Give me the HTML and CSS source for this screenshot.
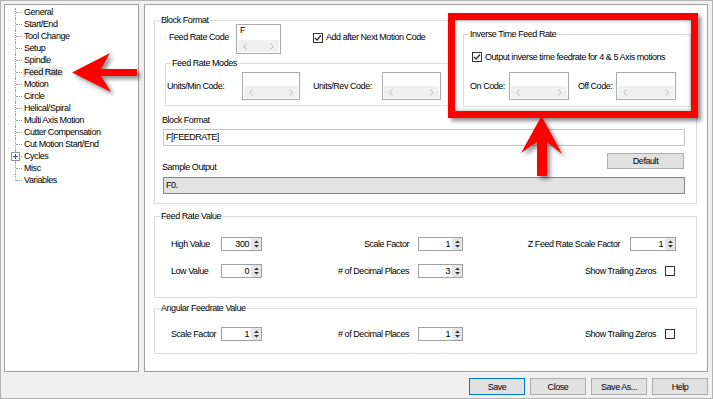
FILE: index.html
```html
<!DOCTYPE html>
<html>
<head>
<meta charset="utf-8">
<title>Feed Rate</title>
<link rel="stylesheet" href="styles.css">
</head>
<body>
<div class="window">
  <div class="main">
    <div class="tree">
      <ul>
        <li><span>General</span></li>
        <li><span>Start/End</span></li>
        <li><span>Tool Change</span></li>
        <li><span>Setup</span></li>
        <li><span>Spindle</span></li>
        <li><span class="sel">Feed Rate</span></li>
        <li><span>Motion</span></li>
        <li><span>Circle</span></li>
        <li><span>Helical/Spiral</span></li>
        <li><span>Multi Axis Motion</span></li>
        <li><span>Cutter Compensation</span></li>
        <li><span>Cut Motion Start/End</span></li>
        <li class="expandable"><span class="exp"><svg width="7" height="7" viewBox="0 0 7 7"><path d="M1 3.5H6M3.5 1V6" stroke="#2a4f9a" stroke-width="1"/></svg></span><span>Cycles</span></li>
        <li><span>Misc</span></li>
        <li><span>Variables</span></li>
      </ul>
    </div>
    <div class="panel">
      <div class="group g-block">
        <div class="legend">Block Format</div>
        <div class="top">
          <div class="topleft">
            <div class="row1">
              <div class="lbl w-frc">Feed Rate Code</div>
              <div class="mbox frc">
                <div class="mtext">F</div>
                <div class="sb"><svg width="4" height="7" viewBox="0 0 4 7"><path d="M3.5 0.5L0.8 3.5L3.5 6.5" fill="none" stroke="#b5b5b5"/></svg><svg width="4" height="7" viewBox="0 0 4 7"><path d="M0.5 0.5L3.2 3.5L0.5 6.5" fill="none" stroke="#b5b5b5"/></svg></div>
              </div>
              <div class="chk on"><svg width="8" height="8" viewBox="0 0 8 8"><path d="M1 4L3 6.2L7 1.5" fill="none" stroke="#222" stroke-width="1.2"/></svg></div>
              <div class="chklbl">Add after Next Motion Code</div>
            </div>
            <div class="group g-modes">
              <div class="legend">Feed Rate Modes</div>
              <div class="modes-row">
                <div class="lbl w-umc">Units/Min Code:</div>
                <div class="mbox box58">
                  <div class="mtext"></div>
                  <div class="sb"><svg width="4" height="7" viewBox="0 0 4 7"><path d="M3.5 0.5L0.8 3.5L3.5 6.5" fill="none" stroke="#b5b5b5"/></svg><svg width="4" height="7" viewBox="0 0 4 7"><path d="M0.5 0.5L3.2 3.5L0.5 6.5" fill="none" stroke="#b5b5b5"/></svg></div>
                </div>
                <div class="lbl w-urc">Units/Rev Code:</div>
                <div class="mbox box59">
                  <div class="mtext"></div>
                  <div class="sb"><svg width="4" height="7" viewBox="0 0 4 7"><path d="M3.5 0.5L0.8 3.5L3.5 6.5" fill="none" stroke="#b5b5b5"/></svg><svg width="4" height="7" viewBox="0 0 4 7"><path d="M0.5 0.5L3.2 3.5L0.5 6.5" fill="none" stroke="#b5b5b5"/></svg></div>
                </div>
              </div>
            </div>
          </div>
          <div class="group g-inverse">
            <div class="legend">Inverse Time Feed Rate</div>
            <div class="inv-chkrow">
              <div class="chk on"><svg width="8" height="8" viewBox="0 0 8 8"><path d="M1 4L3 6.2L7 1.5" fill="none" stroke="#222" stroke-width="1.2"/></svg></div>
              <div class="chklbl2">Output inverse time feedrate for 4 &amp; 5 Axis motions</div>
            </div>
            <div class="inv-row">
              <div class="lbl w-on">On Code:</div>
              <div class="mbox box60">
                <div class="mtext"></div>
                <div class="sb"><svg width="4" height="7" viewBox="0 0 4 7"><path d="M3.5 0.5L0.8 3.5L3.5 6.5" fill="none" stroke="#b5b5b5"/></svg><svg width="4" height="7" viewBox="0 0 4 7"><path d="M0.5 0.5L3.2 3.5L0.5 6.5" fill="none" stroke="#b5b5b5"/></svg></div>
              </div>
              <div class="lbl w-off">Off Code:</div>
              <div class="mbox box60">
                <div class="mtext"></div>
                <div class="sb"><svg width="4" height="7" viewBox="0 0 4 7"><path d="M3.5 0.5L0.8 3.5L3.5 6.5" fill="none" stroke="#b5b5b5"/></svg><svg width="4" height="7" viewBox="0 0 4 7"><path d="M0.5 0.5L3.2 3.5L0.5 6.5" fill="none" stroke="#b5b5b5"/></svg></div>
              </div>
            </div>
          </div>
        </div>
        <div class="lbl bf-lbl">Block Format</div>
        <div class="tbox bf-box">F[FEEDRATE]</div>
        <div class="sample-row">
          <div class="lbl sample-lbl">Sample Output</div>
          <div class="btn default">Default</div>
        </div>
        <div class="tbox sample-box">F0.</div>
      </div>

      <div class="group g-frv">
        <div class="legend">Feed Rate Value</div>
        <div class="frow r1">
          <div class="lbl c1">High Value</div>
          <div class="spin s1"><div class="v">300</div><div class="ar"><svg width="9" height="12" viewBox="0 0 9 12"><path d="M2 5H7L4.5 2.5Z M2 7H7L4.5 9.5Z" fill="#333"/></svg></div></div>
          <div class="lbl c2">Scale Factor</div>
          <div class="spin s2"><div class="v">1</div><div class="ar"><svg width="9" height="12" viewBox="0 0 9 12"><path d="M2 5H7L4.5 2.5Z M2 7H7L4.5 9.5Z" fill="#333"/></svg></div></div>
          <div class="lbl c3">Z Feed Rate Scale Factor</div>
          <div class="spin s3"><div class="v">1</div><div class="ar"><svg width="9" height="12" viewBox="0 0 9 12"><path d="M2 5H7L4.5 2.5Z M2 7H7L4.5 9.5Z" fill="#333"/></svg></div></div>
        </div>
        <div class="frow r2">
          <div class="lbl c1">Low Value</div>
          <div class="spin s1"><div class="v">0</div><div class="ar"><svg width="9" height="12" viewBox="0 0 9 12"><path d="M2 5H7L4.5 2.5Z M2 7H7L4.5 9.5Z" fill="#333"/></svg></div></div>
          <div class="lbl c2"># of Decimal Places</div>
          <div class="spin s2"><div class="v">3</div><div class="ar"><svg width="9" height="12" viewBox="0 0 9 12"><path d="M2 5H7L4.5 2.5Z M2 7H7L4.5 9.5Z" fill="#333"/></svg></div></div>
          <div class="c3b"><div class="lbl">Show Trailing Zeros</div><div class="chk"></div></div>
        </div>
      </div>

      <div class="group g-ang">
        <div class="legend">Angular Feedrate Value</div>
        <div class="frow r3">
          <div class="lbl c1">Scale Factor</div>
          <div class="spin s1"><div class="v">1</div><div class="ar"><svg width="9" height="12" viewBox="0 0 9 12"><path d="M2 5H7L4.5 2.5Z M2 7H7L4.5 9.5Z" fill="#333"/></svg></div></div>
          <div class="lbl c2"># of Decimal Places</div>
          <div class="spin s2"><div class="v">1</div><div class="ar"><svg width="9" height="12" viewBox="0 0 9 12"><path d="M2 5H7L4.5 2.5Z M2 7H7L4.5 9.5Z" fill="#333"/></svg></div></div>
          <div class="c3b"><div class="lbl">Show Trailing Zeros</div><div class="chk"></div></div>
        </div>
      </div>
    </div>
  </div>
  <div class="buttons">
    <div class="btn primary">Save</div>
    <div class="btn">Close</div>
    <div class="btn">Save As...</div>
    <div class="btn">Help</div>
  </div>

  <div class="redbox"></div>
  <svg class="arrows" width="713" height="399" viewBox="0 0 713 399">
    <polygon points="72,72.5 110,53 101,69 137,69 137,76 101,76 111,92" fill="#ff0000"/>
    <polygon points="541.5,116 562,154 547,142 547,176 537,176 537,142 521,153" fill="#ff0000"/>
  </svg>
</div>
</body>
</html>
```

FILE: styles.css
```css
* {
  box-sizing: border-box;
  margin: 0;
  padding: 0;
}

html, body {
  width: 713px;
  height: 399px;
  overflow: hidden;
}

body {
  background: #f0f0f0;
  font-family: "Liberation Sans", Arial, sans-serif;
  font-size: 9px;
  letter-spacing: -0.45px;
  line-height: 12px;
  color: #000;
}

.window {
  position: relative;
  width: 713px;
  height: 399px;
  border: 1px solid #b4b4b4;
  padding: 3px 4px 3px 3px;
  display: flex;
  flex-direction: column;
  gap: 6px;
}

.main {
  display: flex;
  gap: 5px;
  height: 368px;
}

/* ---------- tree ---------- */
.tree {
  width: 135px;
  background: #fff;
  border: 1px solid #a0a0a0;
}

.tree ul {
  list-style: none;
  margin-top: 1px;
  padding-left: 18px;
}

.tree li {
  position: relative;
  height: 12px;
  white-space: nowrap;
}

.tree li span {
  padding: 0 1px;
}

.tree li::before {
  content: "";
  position: absolute;
  left: -8px;
  top: 0;
  height: 12px;
  border-left: 1px dotted #a0a0a0;
}

.tree li:first-child::before {
  top: 2px;
  height: 10px;
}

.tree li:last-child::before {
  height: 7px;
}

.tree li::after {
  content: "";
  position: absolute;
  left: -7px;
  top: 6px;
  width: 6px;
  border-top: 1px dotted #a0a0a0;
}

.tree li span.sel {
  background: #e8e8e8;
}

.tree li span.exp {
  position: absolute;
  left: -12px;
  top: 2px;
  width: 9px;
  height: 9px;
  padding: 0;
  border: 1px solid #919191;
  background: #fff;
  z-index: 1;
  display: flex;
  align-items: center;
  justify-content: center;
}

/* ---------- right panel ---------- */
.panel {
  width: 564px;
  background: #fff;
  border: 1px solid #a0a0a0;
  padding: 15px 0 0 9px;
}

.group {
  border: 1px solid #dcdcdc;
}

.legend {
  width: max-content;
  height: 12px;
  background: #fff;
  margin: -7px 0 -5px 5px;
  padding: 0 1px;
  position: relative;
}

.lbl {
  white-space: nowrap;
}

.g-block {
  width: 543px;
  height: 184px;
}

.top {
  display: flex;
  height: 86px;
}

.topleft {
  width: 308px;
}

.row1 {
  display: flex;
  align-items: flex-start;
  margin-top: 3px;
  height: 30px;
  padding-left: 14px;
}

.w-frc {
  width: 67px;
  margin-top: 7px;
}

.mbox {
  border: 1px solid #ababab;
  background: #fff;
  display: flex;
  flex-direction: column;
  padding: 0 1px 1px 1px;
}

.mtext {
  flex: 1;
  padding-left: 2px;
  line-height: 11px;
}

.sb {
  height: 12px;
  background: #f0f0f0;
  display: flex;
  align-items: center;
  justify-content: space-between;
  padding: 0 5px;
}

.frc {
  width: 45px;
  height: 30px;
}

.chk {
  width: 10px;
  height: 10px;
  border: 1px solid #333;
  background: #fff;
  display: flex;
  align-items: center;
  justify-content: center;
  flex: none;
}

.row1 .chk {
  margin: 9px 0 0 32px;
}

.chklbl {
  margin: 7px 0 0 3px;
}

.g-modes {
  margin: 9px 0 0 10px;
  width: 288px;
  height: 43px;
}

.modes-row {
  display: flex;
  align-items: center;
  margin-top: 8px;
  padding-left: 1px;
  height: 28px;
}

.w-umc {
  width: 75px;
}

.w-urc {
  width: 69px;
  margin-left: 13px;
}

.box58 {
  width: 58px;
  height: 28px;
}

.box59 {
  width: 59px;
  height: 28px;
}

.box60 {
  width: 60px;
  height: 28px;
}

.g-inverse {
  margin-top: 13px;
  width: 228px;
  height: 73px;
}

.inv-chkrow {
  display: flex;
  align-items: center;
  margin: 17px 0 0 8px;
  height: 10px;
}

.chklbl2 {
  margin-left: 3px;
  white-space: nowrap;
}

.inv-row {
  display: flex;
  align-items: center;
  margin-top: 10px;
  padding-left: 6px;
  height: 28px;
}

.w-on {
  width: 39px;
}

.w-off {
  width: 38px;
  margin-left: 9px;
}

.bf-lbl {
  margin: 7px 0 0 7px;
}

.tbox {
  width: 522px;
  height: 17px;
  margin-left: 8px;
  padding-left: 2px;
  line-height: 15px;
}

.bf-box {
  margin-top: 3px;
  border: 1px solid #c4c4c4;
  background: #fff;
}

.sample-row {
  display: flex;
  justify-content: space-between;
  margin: 7px 12px 0 7px;
  height: 24px;
}

.sample-lbl {
  align-self: flex-end;
  margin-bottom: 4px;
}

.sample-box {
  background: #e3e3e3;
  border: 1px solid #858585;
}

.btn {
  width: 56px;
  height: 17px;
  border: 1px solid #adadad;
  background: #e1e1e1;
  display: flex;
  align-items: center;
  justify-content: center;
  white-space: nowrap;
}

.btn.default {
  width: 77px;
  height: 16px;
}

.btn.primary {
  border-color: #0078d7;
}

/* ---------- value groups ---------- */
.g-frv {
  margin-top: 12px;
  width: 543px;
  height: 82px;
}

.g-ang {
  margin-top: 10px;
  width: 543px;
  height: 46px;
}

.frow {
  display: flex;
  align-items: center;
  height: 14px;
  padding-left: 16px;
}

.frow.r1 {
  margin-top: 20px;
}

.frow.r2 {
  margin-top: 13px;
}

.frow.r3 {
  margin-top: 18px;
}

.c1 {
  width: 50px;
}

.c2 {
  width: 147px;
  text-align: right;
}

.c3 {
  width: 157px;
  text-align: right;
}

.c3b {
  width: 212px;
  display: flex;
  justify-content: flex-end;
  align-items: center;
}

.c3b .chk {
  margin-left: 9px;
}

.spin {
  display: flex;
  height: 14px;
  border: 1px solid #a0a0a0;
  background: #fff;
}

.spin .v {
  flex: 1;
  text-align: right;
  padding-right: 2px;
  line-height: 12px;
}

.spin .ar {
  width: 10px;
  background: #e6e6e6;
  display: flex;
  align-items: center;
  justify-content: center;
}

.s1 {
  width: 41px;
}

.s2 {
  width: 45px;
  margin-left: 9px;
}

.s3 {
  width: 46px;
  margin-left: 10px;
}

/* ---------- bottom buttons ---------- */
.buttons {
  display: flex;
  justify-content: flex-end;
  gap: 5px;
  height: 17px;
}

/* ---------- annotations ---------- */
.redbox {
  position: absolute;
  left: 447px;
  top: 12px;
  width: 250px;
  height: 105px;
  border: 7px solid #ff0000;
  box-shadow: 3px 3px 4px rgba(0, 0, 0, 0.45), inset 0 0 4px rgba(0, 0, 0, 0.35);
}

.arrows {
  position: absolute;
  left: -1px;
  top: -1px;
  filter: drop-shadow(3px 3px 2px rgba(0, 0, 0, 0.45));
  pointer-events: none;
}
```
